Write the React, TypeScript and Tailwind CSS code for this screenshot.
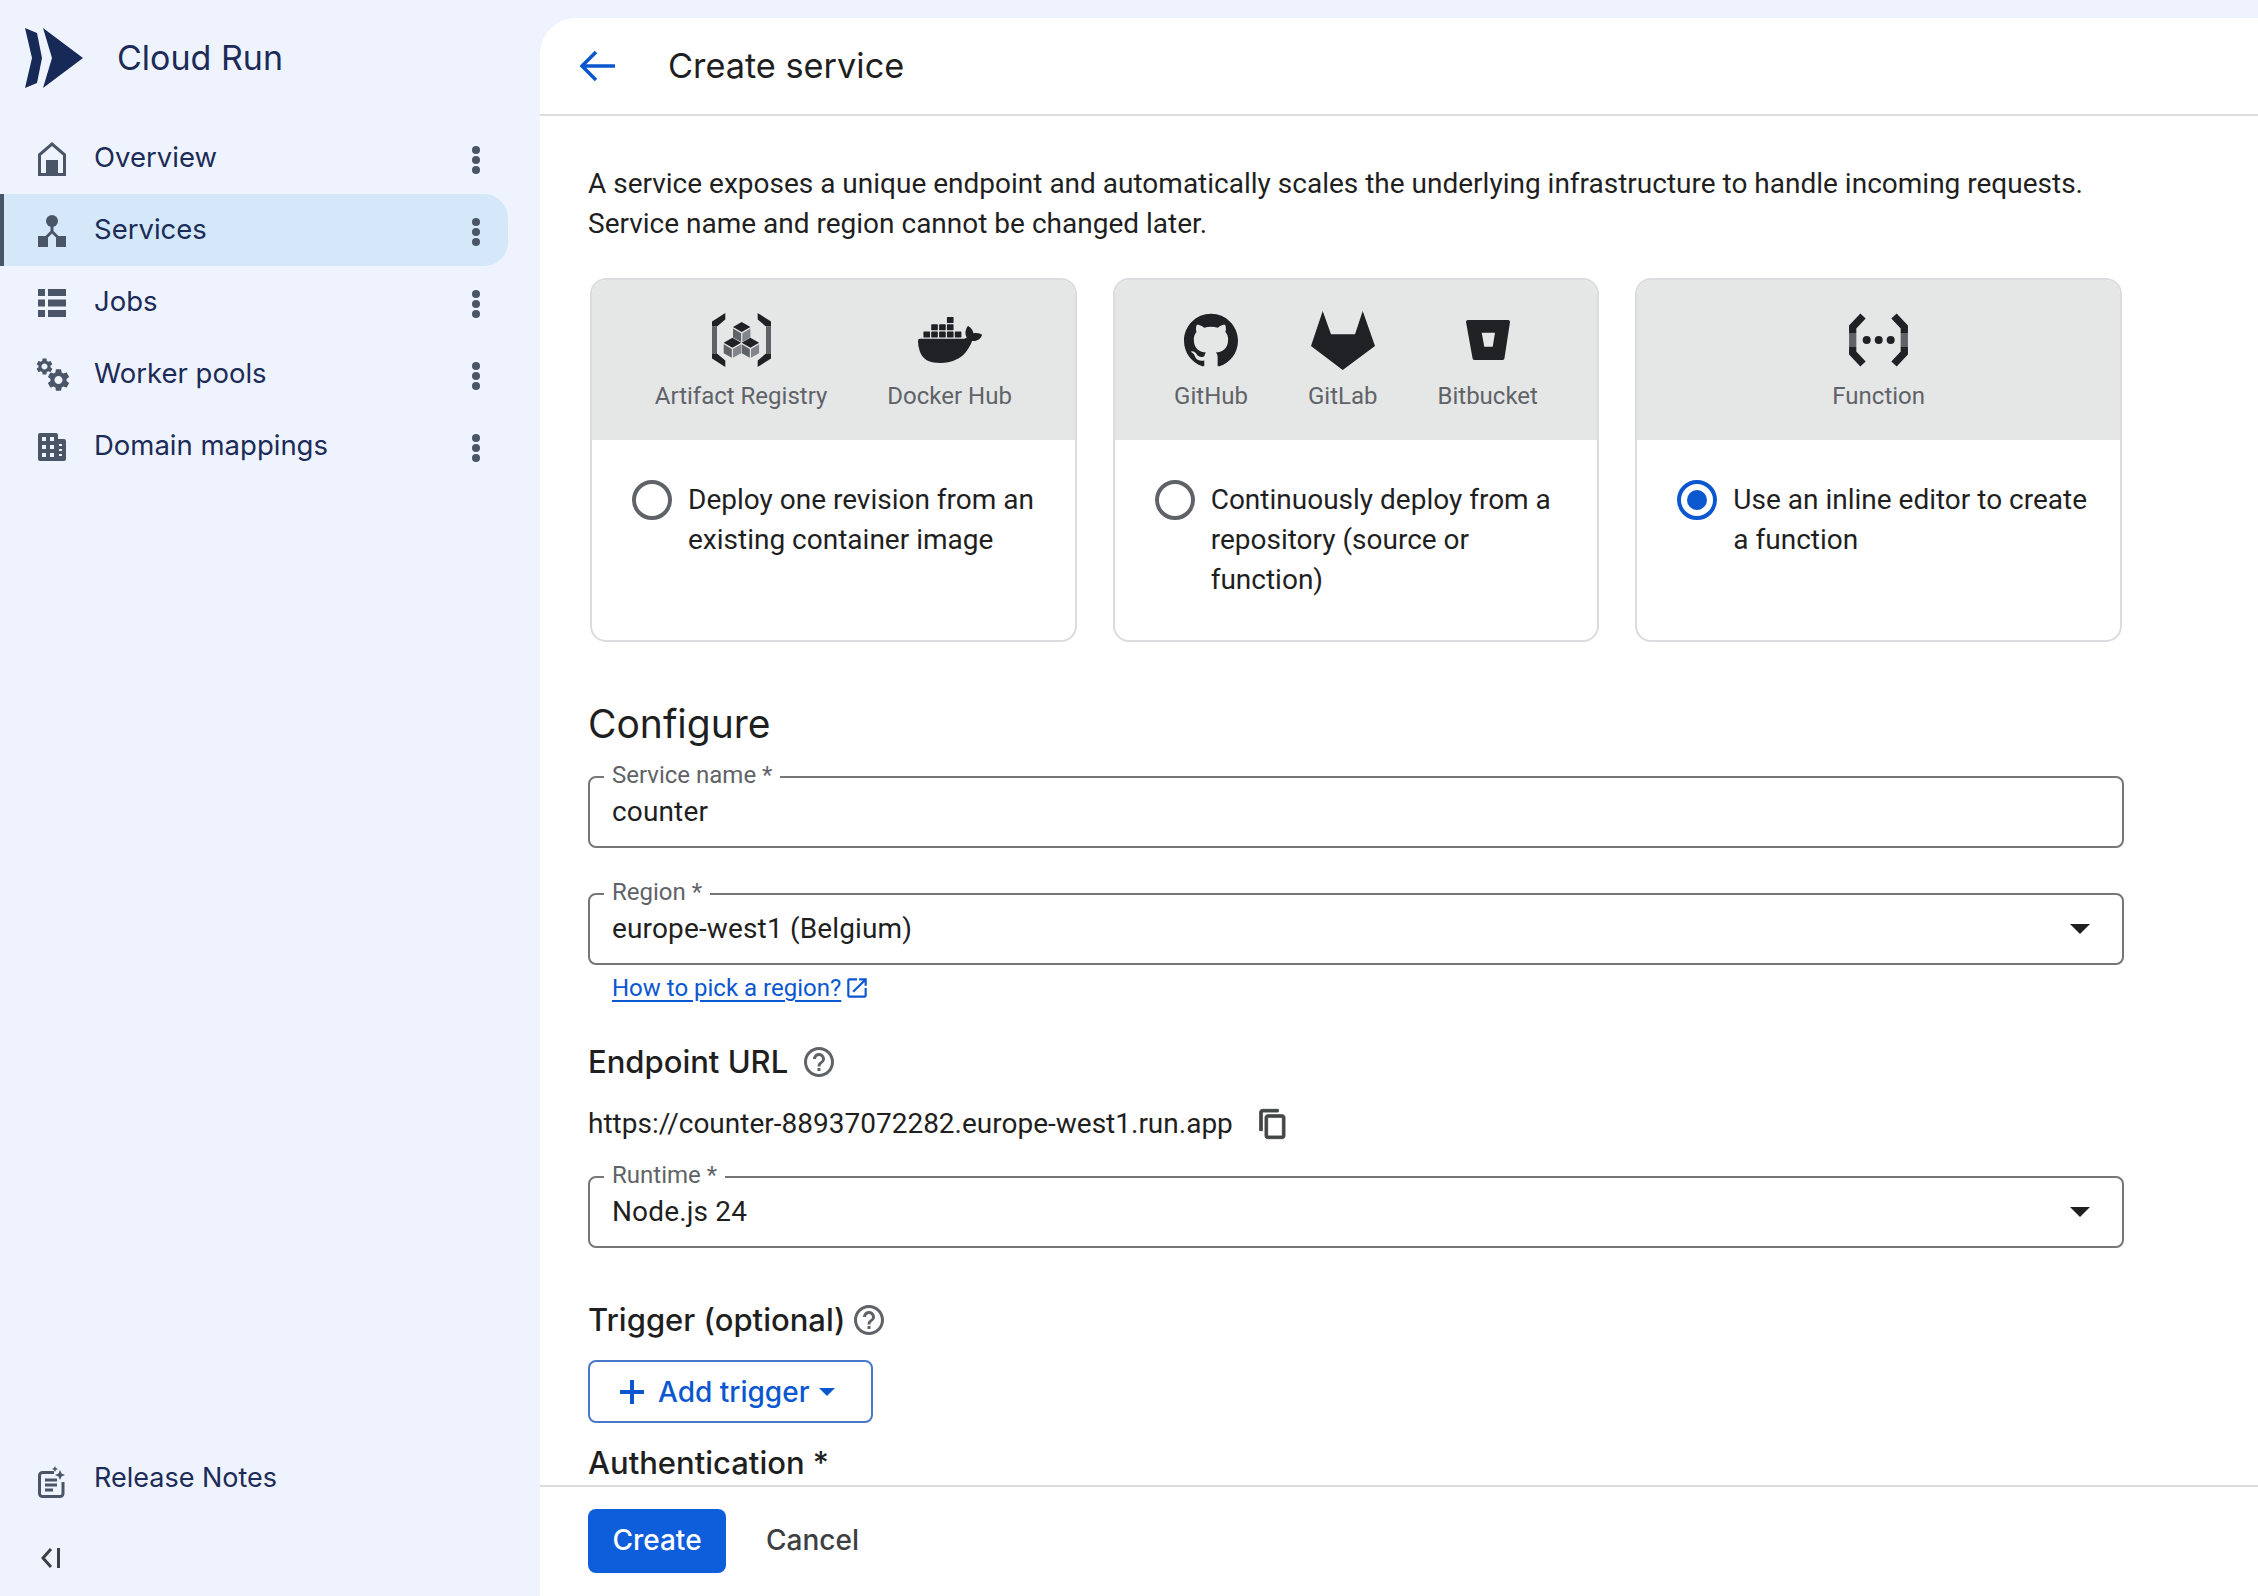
import React from "react";
import { SiDocker, SiGithub } from "react-icons/si";

const gs = "font-['Inter',sans-serif]";

function Kebab() {
  return (
    <svg width="8" height="28" viewBox="0 0 8 28" className="fill-[#4a5568] shrink-0 mt-[3px]">
      <circle cx="4" cy="4" r="4" />
      <circle cx="4" cy="14" r="4" />
      <circle cx="4" cy="24" r="4" />
    </svg>
  );
}

const GEAR =
  "M19.14 12.94c.04-.3.06-.61.06-.94 0-.32-.02-.64-.07-.94l2.03-1.58c.18-.14.23-.41.12-.61l-1.92-3.32c-.12-.22-.37-.29-.59-.22l-2.39.96c-.5-.38-1.03-.7-1.62-.94l-.36-2.54c-.04-.24-.24-.41-.48-.41h-3.84c-.24 0-.43.17-.47.41l-.36 2.54c-.59.24-1.13.57-1.62.94l-2.39-.96c-.22-.08-.47 0-.59.22L2.74 8.87c-.12.21-.08.47.12.61l2.03 1.58c-.05.3-.09.63-.09.94s.02.64.07.94l-2.03 1.58c-.18.14-.23.41-.12.61l1.92 3.32c.12.22.37.29.59.22l2.39-.96c.5.38 1.03.7 1.62.94l.36 2.54c.05.24.24.41.48.41h3.84c.24 0 .44-.17.47-.41l.36-2.54c.59-.24 1.13-.56 1.62-.94l2.39.96c.22.08.47 0 .59-.22l1.92-3.32c.12-.22.07-.47-.12-.61l-2.01-1.58zM12 15.6c-1.98 0-3.6-1.62-3.6-3.6s1.62-3.6 3.6-3.6 3.6 1.62 3.6 3.6-1.62 3.6-3.6 3.6z";

const sideIcons: Record<string, React.ReactNode> = {
  home: (
    <svg width="30" height="34" viewBox="0 0 30 34" fill="#4a5568">
      <path fillRule="evenodd" d="M15 0 29 12v22H1V12zM15 4 4 13.5V31h5V18h12v13h5V13.5z" />
      <rect x="9" y="18" width="12" height="13" />
    </svg>
  ),
  services: (
    <svg width="28" height="32" viewBox="0 0 28 32" fill="#4a5568">
      <circle cx="14" cy="6" r="6" />
      <rect x="0" y="21" width="10" height="11" />
      <rect x="18" y="21" width="10" height="11" />
      <path d="M12.5 10h3v6l5 5-2 2-4.5-4.5L9.500 23l-2-2 5-5z" />
    </svg>
  ),
  jobs: (
    <svg width="28" height="28" viewBox="0 0 28 28" fill="#4a5568">
      <rect x="0" y="0" width="7" height="7" />
      <rect x="10" y="0" width="18" height="7" />
      <rect x="0" y="10.500" width="7" height="7" />
      <rect x="10" y="10.500" width="18" height="7" />
      <rect x="0" y="21" width="7" height="7" />
      <rect x="10" y="21" width="18" height="7" />
    </svg>
  ),
  workers: (
    <svg width="32" height="33" viewBox="0 0 32 33" fill="#4a5568" className="overflow-visible">
      <svg x="-1.500" y="-1.500" width="20" height="20" viewBox="0 0 24 24"><path d={GEAR} /></svg>
      <svg x="9" y="8.500" width="27" height="27" viewBox="0 0 24 24"><path d={GEAR} /></svg>
    </svg>
  ),
  domain: (
    <svg width="28" height="28" viewBox="0 0 28 28" fill="#4a5568">
      <path
        fillRule="evenodd"
        d="M2 0h16a2 2 0 0 1 2 2v4h6a2 2 0 0 1 2 2v18a2 2 0 0 1-2 2H2a2 2 0 0 1-2-2V2a2 2 0 0 1 2-2zM4 4v4h4V4zM12 4v4h4V4zM4 12v4h4v-4zM12 12v4h4v-4zM4 20v4h4v-4zM12 20v4h4v-4zM21 11v2h3v-2zM21 16v2h3v-2zM21 21v2h3v-2z"
      />
    </svg>
  ),
};

function NavRow({ icon, label, active }: { icon: string; label: string; active?: boolean }) {
  return (
    <div
      className={`flex items-center h-[72px] w-[508px] rounded-r-[24px] border-l-4 ${
        active ? "bg-[#d4e8fa] border-[#4a5568]" : "border-transparent"
      }`}
    >
      <div className="w-[66px] pl-[32px] flex items-center justify-start shrink-0">
        <div className="w-[32px] flex justify-center mt-[1px]">{sideIcons[icon]}</div>
      </div>
      <span className={`ml-[24px] mb-[2px] flex-1 text-[27.500px] leading-[36px] text-[#1c2b57] ${gs}`}>{label}</span>
      <div className="mr-[28px]">
        <Kebab />
      </div>
    </div>
  );
}

function Sidebar() {
  return (
    <aside className="w-[540px] shrink-0 flex flex-col h-full">
      <div className="flex items-center h-[122px] pl-[25px] pb-[6px]">
        <svg width="58" height="60" viewBox="0 0 58 60" fill="#172a57" className="shrink-0">
          <path d="M0 0 12 5 17 30 12 55 0 60 7 30z" />
          <path d="M18 0 58 30 18 60 27 30z" />
        </svg>
        <span className={`ml-[34px] mb-[1px] text-[34px] leading-[44px] text-[#1c2b57] ${gs}`}>Cloud Run</span>
      </div>
      <NavRow icon="home" label="Overview" />
      <NavRow icon="services" label="Services" active />
      <NavRow icon="jobs" label="Jobs" />
      <NavRow icon="workers" label="Worker pools" />
      <NavRow icon="domain" label="Domain mappings" />
      <div className="flex-1" />
      <div className="flex items-center h-[36px] pl-[38px] mb-[50px]">
        <svg width="28" height="32" viewBox="0 0 28 32" fill="none" stroke="#4a5568" className="shrink-0 mt-[3px]">
          <path d="M16 6.500H4.500a3 3 0 0 0-3 3v18a3 3 0 0 0 3 3H22a3 3 0 0 0 3-3V16" strokeWidth="3" />
          <path d="M7 14h12M7 19h12M7 24h8" strokeWidth="3" />
          <path d="M22 4l1.500 3.500L27 9l-3.500 1.500L22 14l-1.500-3.500L17 9l3.500-1.500z" fill="#4a5568" stroke="none" />
          <path d="M17 0l.9 2.100L20 3l-2.100.9L17 6l-.9-2.100L14 3l2.100-.9z" fill="#4a5568" stroke="none" />
        </svg>
        <span className={`ml-[28px] mb-[5px] text-[27px] leading-[36px] text-[#1c2b57] ${gs}`}>Release Notes</span>
      </div>
      <div className="pl-[41px] pb-[28px]">
        <svg width="20" height="20" viewBox="0 0 20 20" fill="none" stroke="#3c4043" strokeWidth="3">
          <path d="M10 1 2 10l8 9" />
          <path d="M17.500 0v20" />
        </svg>
      </div>
    </aside>
  );
}

function Cube({ x, y }: { x: number; y: number }) {
  return (
    <g transform={`translate(${x} ${y})`}>
      <path d="M8.700 0l8.700 5-8.700 5L0 5z" fill="#202124" />
      <path d="M0 6.500l8.100 4.700V20L0 15.500z" fill="#5f6368" />
      <path d="M17.400 6.500 9.300 11.200V20l8.100-4.500z" fill="#80868b" />
    </g>
  );
}

function ArtifactIcon() {
  return (
    <svg width="59" height="54" viewBox="0 0 59 54">
      <path d="M13.300 0v6.500L5 13.500H0V8.500z" fill="#202124" />
      <rect x="0" y="13.500" width="5" height="27" fill="#5f6368" />
      <path d="M13.300 54v-6.500L5 40.500H0v5z" fill="#202124" />
      <path d="M45.700 0v6.500l8.300 7h5V8.500z" fill="#202124" />
      <rect x="54" y="13.500" width="5" height="27" fill="#5f6368" />
      <path d="M45.700 54v-6.500l8.300-7h5v5z" fill="#202124" />
      <Cube x={21} y={9} />
      <Cube x={11.700} y={24.700} />
      <Cube x={29.700} y={24.700} />
    </svg>
  );
}

function GitlabIcon() {
  return (
    <svg width="64" height="59" viewBox="0 0 64 59" fill="#202124">
      <path d="M11.700 0 20 23.300H44L51.700 0 64 35 31.700 59 0 35z" />
    </svg>
  );
}

function BitbucketIcon() {
  return (
    <svg width="44" height="40" viewBox="0 0 44 40">
      <path
        fillRule="evenodd"
        fill="#202124"
        d="M2 0h40a2 2 0 0 1 2 2l-5.500 36a2 2 0 0 1-2 2H8.500a2 2 0 0 1-2-2L0 2a2 2 0 0 1 2-2zM15.700 12.700l2.600 14h8.400l2.300-14z"
      />
    </svg>
  );
}

function FunctionIcon() {
  return (
    <svg width="59" height="54" viewBox="0 0 59 54" fill="none" strokeWidth="7.300">
      <path d="M14 3 3.700 14v6" stroke="#202124" />
      <path d="M3.700 20v14" stroke="#5f6368" />
      <path d="M3.700 34v6L14 51" stroke="#202124" />
      <path d="M45 3l10.300 11v6" stroke="#202124" />
      <path d="M55.300 20v14" stroke="#5f6368" />
      <path d="M55.300 34v6L45 51" stroke="#202124" />
      <circle cx="17.700" cy="27" r="4" fill="#202124" stroke="none" />
      <circle cx="29.700" cy="27" r="4" fill="#202124" stroke="none" />
      <circle cx="41.700" cy="27" r="4" fill="#202124" stroke="none" />
    </svg>
  );
}

function Source({ icon, label }: { icon: React.ReactNode; label: string }) {
  return (
    <div className="flex flex-col items-center">
      <div className="h-[60px] flex items-center justify-center">{icon}</div>
      <span className="mt-[10px] text-[24px] leading-[32px] text-[#5f6368]">{label}</span>
    </div>
  );
}

function Card({
  sources,
  text,
  checked,
}: {
  sources: { icon: React.ReactNode; label: string }[];
  text: string;
  checked?: boolean;
}) {
  return (
    <div className="flex-1 h-[364px] rounded-[16px] border-2 border-[#dadce0] overflow-hidden bg-white">
      <div className="h-[160px] bg-[#e5e7e7] flex justify-center gap-[60px] pt-[30px]">
        {sources.map((s) => (
          <Source key={s.label} icon={s.icon} label={s.label} />
        ))}
      </div>
      <div className="flex pl-[40px] pr-[20px] pt-[40px]">
        <div
          className={`w-[40px] h-[40px] rounded-full border-[4px] shrink-0 flex items-center justify-center ${
            checked ? "border-[#0b57d0]" : "border-[#5f6368]"
          }`}
        >
          {checked && <div className="w-[20px] h-[20px] rounded-full bg-[#0b57d0]" />}
        </div>
        <p className="ml-[16px] text-[28px] leading-[40px] text-[#1f1f1f]">{text}</p>
      </div>
    </div>
  );
}

function Field({ label, value, select, className }: { label: string; value: string; select?: boolean; className?: string }) {
  return (
    <div className={`relative h-[72px] border-2 border-[#747775] rounded-[8px] flex items-center pl-[22px] pr-[18px] ${className ?? ""}`}>
      <span className="absolute left-[14px] -top-[19px] bg-white px-[8px] text-[24px] leading-[32px] text-[#5f6368]">{label}</span>
      <span className="flex-1 text-[28px] text-[#1f1f1f] leading-[36px] tracking-[0.15px]">{value}</span>
      {select && (
        <svg width="20" height="10" viewBox="0 0 20 10" fill="#1f1f1f" className="mr-[14px]">
          <path d="M0 0h20L10 10z" />
        </svg>
      )}
    </div>
  );
}

function Help() {
  return (
    <svg width="36" height="36" viewBox="0 0 24 24" fill="#5f6368" className="shrink-0">
      <path d="M11 18h2v-2h-2v2zm1-16C6.480 2 2 6.480 2 12s4.480 10 10 10 10-4.480 10-10S17.520 2 12 2zm0 18c-4.410 0-8-3.590-8-8s3.590-8 8-8 8 3.590 8 8-3.590 8-8 8zm0-14c-2.210 0-4 1.790-4 4h2c0-1.100.9-2 2-2s2 .9 2 2c0 2-3 1.750-3 5h2c0-2.250 3-2.500 3-5 0-2.210-1.790-4-4-4z" />
    </svg>
  );
}

function Main() {
  return (
    <main className="flex-1 min-w-0 mt-[18px] bg-white rounded-tl-[36px] flex flex-col font-['Roboto',sans-serif]">
      <header className="h-[98px] shrink-0 border-b-2 border-[#dadce0] flex items-center pl-[39px]">
        <svg width="36" height="36" viewBox="0 0 36 36" fill="none" stroke="#0b57d0" strokeWidth="3.500">
          <path d="M36 18H3M17 4 3 18l14 14" />
        </svg>
        <h1 className={`ml-[53px] mb-[1px] text-[34.300px] leading-[44px] text-[#1f1f1f] ${gs}`}>Create service</h1>
      </header>

      <div className="flex-1 min-h-0 overflow-hidden pl-[48px]">
        <div className="w-[1536px]">
          <p className="pt-[48px] text-[28px] leading-[40px] text-[#1f1f1f]">
            A service exposes a unique endpoint and automatically scales the underlying infrastructure to handle incoming requests.
            <br />
            Service name and region cannot be changed later.
          </p>

          <div className="mt-[34px] flex gap-[36px] pl-[2px] pr-[2px]">
            <Card
              sources={[
                { icon: <ArtifactIcon />, label: "Artifact Registry" },
                { icon: <SiDocker size={64} color="#202124" />, label: "Docker Hub" },
              ]}
              text="Deploy one revision from an existing container image"
            />
            <Card
              sources={[
                { icon: <SiGithub size={54} color="#202124" />, label: "GitHub" },
                { icon: <GitlabIcon />, label: "GitLab" },
                { icon: <BitbucketIcon />, label: "Bitbucket" },
              ]}
              text="Continuously deploy from a repository (source or function)"
            />
            <Card sources={[{ icon: <FunctionIcon />, label: "Function" }]} text="Use an inline editor to create a function" checked />
          </div>

          <h2 className={`mt-[56px] text-[39px] leading-[52px] text-[#1f1f1f] ${gs}`}>Configure</h2>
          <Field className="mt-[26px]" label="Service name *" value="counter" />
          <Field className="mt-[45px]" label="Region *" value="europe-west1 (Belgium)" select />
          <div className="mt-[7px] pl-[24px] flex items-center h-[32px]">
            <span className="text-[24px] leading-[32px] text-[#0b57d0] underline underline-offset-[4px]">How to pick a region?</span>
            <svg width="26" height="26" viewBox="0 0 24 24" fill="#0b57d0" className="ml-[3px]">
              <path d="M19 19H5V5h7V3H5c-1.110 0-2 .9-2 2v14c0 1.100.89 2 2 2h14c1.100 0 2-.9 2-2v-7h-2v7zM14 3v2h3.590l-9.830 9.830 1.410 1.410L19 6.410V10h2V3h-7z" />
            </svg>
          </div>

          <div className="mt-[38px] h-[40px] flex items-center gap-[13px]">
            <h3 className={`text-[31px] leading-[40px] font-medium text-[#1f1f1f] ${gs}`}>Endpoint URL</h3>
            <Help />
          </div>
          <div className="mt-[22px] h-[40px] flex items-center">
            <span className="text-[28px] leading-[40px] text-[#1f1f1f]">https://counter-88937072282.europe-west1.run.app</span>
            <svg width="32" height="32" viewBox="0 0 24 24" fill="#444746" stroke="#444746" strokeWidth="0.7" className="ml-[24px]">
              <path d="M16 1H4c-1.100 0-2 .9-2 2v14h2V3h12V1zm3 4H8c-1.100 0-2 .9-2 2v14c0 1.100.9 2 2 2h11c1.100 0 2-.9 2-2V7c0-1.100-.9-2-2-2zm0 16H8V7h11v14z" />
            </svg>
          </div>
          <Field className="mt-[32px]" label="Runtime *" value="Node.js 24" select />

          <div className="mt-[52px] h-[40px] flex items-center gap-[6px]">
            <h3 className={`text-[31px] leading-[40px] font-medium text-[#1f1f1f] ${gs}`}>Trigger (optional)</h3>
            <Help />
          </div>
          <button className={`mt-[20px] h-[63px] w-[285px] rounded-[8px] border-2 border-[#4a78c8] flex items-center pl-[30px] text-[#0b57d0] ${gs}`}>
            <svg width="24" height="24" viewBox="0 0 24 24" stroke="#0b57d0" strokeWidth="4">
              <path d="M12 0v24M0 12h24" />
            </svg>
            <span className="ml-[14px] text-[28px] leading-[36px] font-medium">Add trigger</span>
            <svg width="16" height="8" viewBox="0 0 16 8" fill="#0b57d0" className="ml-[10px]">
              <path d="M0 0h16L8 8z" />
            </svg>
          </button>
          <h3 className={`mt-[20px] text-[31px] leading-[40px] font-medium text-[#1f1f1f] ${gs}`}>Authentication *</h3>
        </div>
      </div>

      <footer className="h-[111px] shrink-0 border-t-2 border-[#dadce0] pl-[48px] pt-[22px] flex items-start">
        <button className={`h-[64px] w-[138px] rounded-[8px] bg-[#0e5ddb] text-white text-[28px] font-medium pb-[2px] ${gs}`}>Create</button>
        <span className={`ml-[40px] h-[64px] pb-[2px] flex items-center text-[28px] font-medium text-[#3c4043] ${gs}`}>Cancel</span>
      </footer>
    </main>
  );
}

export default function App() {
  return (
    <div className="w-[2258px] h-[1596px] bg-[#eef3fe] flex overflow-hidden">
      <Sidebar />
      <Main />
    </div>
  );
}
